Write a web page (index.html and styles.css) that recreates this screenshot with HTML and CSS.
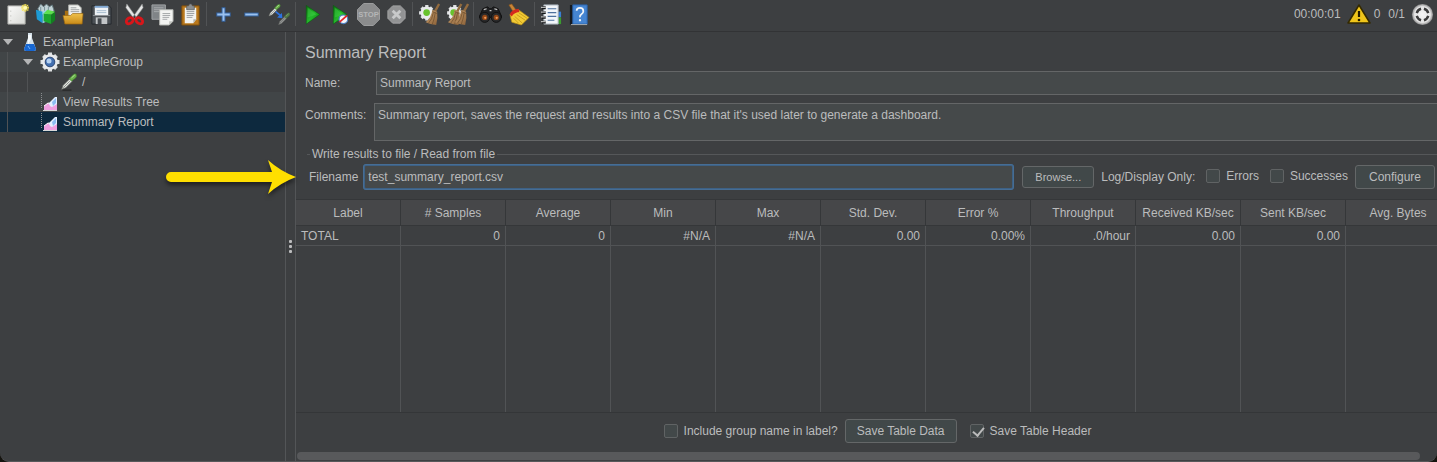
FILE: index.html
```html
<!DOCTYPE html>
<html lang="en">
<head>
<meta charset="utf-8">
<meta name="viewport" content="width=device-width, initial-scale=1">
<title>Summary Report</title>
<link rel="stylesheet" href="styles.css">
</head>
<body>
<svg class="defs" aria-hidden="true">
  <defs>
    <linearGradient id="green" x1="0" y1="0" x2="1" y2="1"><stop offset="0" stop-color="#0a6a0e"/><stop offset=".5" stop-color="#25b82c"/><stop offset="1" stop-color="#077a0c"/></linearGradient>
    <linearGradient id="gold" x1="0" y1="0" x2="0" y2="1"><stop offset="0" stop-color="#efc04c"/><stop offset="1" stop-color="#c98a18"/></linearGradient>
    <linearGradient id="paper" x1="0" y1="0" x2="1" y2="1"><stop offset="0" stop-color="#fbfbfa"/><stop offset="1" stop-color="#d9dad6"/></linearGradient>
    <linearGradient id="straw" x1="0" y1="0" x2="1" y2="1"><stop offset="0" stop-color="#c8a070"/><stop offset="1" stop-color="#8d6238"/></linearGradient>
    <radialGradient id="silver"><stop offset="0" stop-color="#f5f5f5"/><stop offset=".75" stop-color="#e4e4e4"/><stop offset="1" stop-color="#8c8c8c"/></radialGradient>
    <g id="gear">
      <g stroke="#dfe1e2" stroke-width="4"><path d="M12 2.500v19M2.500 12h19M5.500 5.500l13 13M18.500 5.500l-13 13"/></g>
      <circle cx="12" cy="12" r="7.800" fill="#e9eaec"/>
    </g>
    <g id="pipette">
      <path d="M3 21l2-5 8-8 3 3-8 8z" fill="#e4e6e2" stroke="#63665f" stroke-width=".8"/>
      <path d="M5 19l8-8" stroke="#8d928c" stroke-width="1.200"/>
      <path d="M12 8l5-5q3-2 4 0t-1 4l-5 4z" fill="#69b04b" stroke="#3f7d2b" stroke-width=".6"/>
      <path d="M15 7l4-3.500" stroke="#b4e39b" stroke-width="1.200"/>
    </g>
    <g id="play"><path d="M5.500 2.500L19.500 12 5.500 22z" fill="url(#green)" stroke="#0b5d10" stroke-width=".6"/><path d="M7 5v10l9-3z" fill="#3ed044" opacity=".5"/></g>
    <g id="chart">
      <path d="M.5 0v16" stroke="#8a8d8f" stroke-dasharray="1 1"/>
      <path d="M3 17v-4l4-3 4 1 5-4v10z" fill="#ee9fe0"/>
      <path d="M3 13l4-3 4 1" stroke="#fff" fill="none"/>
      <path d="M8 10l6-6h2v7l-5 3q-3-1-3-4z" fill="#e4efff"/>
      <path d="M11 9l4-4v5l-3 3z" fill="#8bbdf3"/>
      <path d="M2 17.500h14" stroke="#d8d8d8"/>
    </g>
    <g id="besom">
      <path d="M22 1l-5 9" stroke="#936b3e" stroke-width="2.500"/>
      <path d="M15 7l5 2q1 7-1 14l-6-1-5-2q6-5 7-13z" fill="url(#straw)"/>
      <path d="M16 10q-1 7-5 11M18 10q-1 7-3 12M15 9l5 2" stroke="#70502e" fill="none" stroke-width=".8"/>
    </g>
  </defs>
</svg>

<div class="window">
  <header class="toolbar">
    <button class="tool" aria-label="New"><svg viewBox="0 0 24 24"><path d="M2 3h18v19H2z" fill="url(#paper)" stroke="#a9aaa6"/><path d="M5 8v1M5 13v1M5 18v1" stroke="#b5b5b0"/><circle cx="20" cy="5" r="4" fill="#f7e65c" opacity=".5"/><path d="M20 1v8M16 5h8M17 2l6 6M23 2l-6 6" stroke="#f7e452"/><circle cx="20" cy="5" r="2" fill="#fffbb4"/></svg></button>
    <button class="tool" aria-label="Templates"><svg viewBox="0 0 24 24"><path d="M4 6l3-5 3 3 3-3 3 3 3-2 2 6-6 4H7z" fill="#c1d2d6" stroke="#62777c"/><path d="M7 4v5M11 4v4M15 4v4" stroke="#779198"/><path d="M2 7l7 2v12l-6-4z" fill="#1d9bd6"/><path d="M9 9l5-2v12l-5 2z" fill="#93d5ec"/><path d="M10 11l8 1v10l-8-3z" fill="#1ca62e"/><path d="M18 12l4-3v9l-4 4z" fill="#128020"/><path d="M10 11l4-4 8 2-4 3z" fill="#5de14e"/></svg></button>
    <button class="tool" aria-label="Open"><svg viewBox="0 0 24 24"><path d="M3 8h5l1 2h12v12H3z" fill="#a86f12"/><path d="M7 2h10l3 3v11H7z" fill="#f0f1ef" stroke="#b0b2ae"/><path d="M9 5h6M9 7h9M9 9h9" stroke="#9da1a3"/><path d="M1 13h8l2-2h11l-1 11H3z" fill="url(#gold)" stroke="#966511" stroke-width=".7"/></svg></button>
    <button class="tool" aria-label="Save"><svg viewBox="0 0 24 24"><path d="M2 3h18l2 2v17H2z" fill="#4b5055" stroke="#25292d"/><path d="M5 3h14v10H5z" fill="#eef2f6"/><path d="M5 3h14v2H5z" fill="#7fa6d0"/><path d="M7 8h10M7 10h10" stroke="#a5bacd"/><path d="M6 15h12v7H6z" fill="#c2c5c7"/><path d="M8 16h4v6H8z" fill="#44494e"/><path d="M3 13h18" stroke="#8c9196"/></svg></button>
    <span class="sep"></span>
    <button class="tool" aria-label="Cut"><svg viewBox="0 0 24 24"><path d="M4 1l10 14-2 2L3 5zM20 1L10 15l2 2 9-12z" fill="#e4e5e5" stroke="#8d8f90" stroke-width=".6"/><g fill="none" stroke="#d8161a" stroke-width="3"><ellipse cx="7" cy="18.500" rx="3.800" ry="2.800" transform="rotate(-35 7 18.500)"/><ellipse cx="17" cy="18.500" rx="3.800" ry="2.800" transform="rotate(35 17 18.500)"/></g></svg></button>
    <button class="tool" aria-label="Copy"><svg viewBox="0 0 24 24"><path d="M1 2h14v15H1z" fill="#808487" stroke="#a0a3a5"/><path d="M3 5h10M3 7h10M3 9h8" stroke="#a8abad"/><path d="M9 7h14v12l-4 4H9z" fill="#f3f4f2" stroke="#b0b2ae"/><path d="M12 11h8M12 13h8M12 15h7M12 17h5" stroke="#a3a6a8"/><path d="M19 23v-4h4z" fill="#c1c3bf"/></svg></button>
    <button class="tool" aria-label="Paste"><svg viewBox="0 0 24 24"><path d="M3 3h18v20H3z" fill="#b9781c" stroke="#7d4e0e"/><path d="M6 5h12v12l-3 4H6z" fill="#f3f3f0"/><path d="M8 9h8M8 11h8M8 13h7M8 15h6" stroke="#9a9d9f"/><path d="M15 21v-4h3z" fill="#b4b6b1"/><path d="M8 3h2l1-2h2l1 2h2v4H8z" fill="#8b8e90" stroke="#55585a" stroke-width=".7"/></svg></button>
    <span class="sep"></span>
    <button class="tool" aria-label="Expand"><svg viewBox="0 0 24 24"><path d="M12 4.500v15M4.500 12h15" stroke="#3465a4" stroke-width="4"/><path d="M12 5.500v13M5.500 12h13" stroke="#9bc1ee" stroke-width="2"/></svg></button>
    <button class="tool" aria-label="Collapse"><svg viewBox="0 0 24 24"><path d="M4.500 12h15" stroke="#3465a4" stroke-width="4"/><path d="M5.500 12h13" stroke="#9bc1ee" stroke-width="2"/></svg></button>
    <button class="tool" aria-label="Toggle"><svg viewBox="0 0 24 24"><use href="#pipette" transform="translate(-1 0) scale(.65)"/><use href="#pipette" transform="translate(9 9) scale(.65)" opacity=".55"/><path d="M8 9l5 4" stroke="#2d73e0" stroke-width="1.800"/><path d="M15 16l-5.500-1 5-4.500z" fill="#2d73e0"/></svg></button>
    <span class="sep"></span>
    <button class="tool" aria-label="Start"><svg viewBox="0 0 24 24"><use href="#play"/></svg></button>
    <button class="tool" aria-label="Start no pauses"><svg viewBox="0 0 24 24"><use href="#play" x="-1"/><circle cx="15" cy="17" r="4.500" fill="#f4f6fa" stroke="#5080c4" stroke-width="1.200"/><path d="M11 20l8-7" stroke="#e32424" stroke-width="1.800"/></svg></button>
    <button class="tool" aria-label="Stop"><svg viewBox="0 0 24 24"><path d="M7 .5h10l6.500 6.500v10L17 23.500H7L.5 17V7z" fill="#8b8c8d" stroke="#a0a1a2"/><text class="stop-text" x="12" y="15" text-anchor="middle">STOP</text></svg></button>
    <button class="tool" aria-label="Shutdown"><svg viewBox="0 0 24 24"><path d="M8 3h8l5 5v8l-5 5H8l-5-5V8z" fill="#929394" stroke="#a3a4a5"/><path d="M8 8l8 8M16 8l-8 8" stroke="#c8c9ca" stroke-width="3"/></svg></button>
    <span class="sep"></span>
    <button class="tool" aria-label="Clear"><svg viewBox="0 0 24 24"><use href="#gear" transform="translate(-1 0) scale(.85)"/><circle cx="9" cy="10" r="3.500" fill="#68c22d"/><use href="#besom"/></svg></button>
    <button class="tool" aria-label="Clear all"><svg viewBox="0 0 24 24"><use href="#gear" transform="translate(-1 0) scale(.85)"/><circle cx="8" cy="10" r="3.500" fill="#68c22d"/><use href="#besom" x="-6"/><use href="#besom" x="1"/></svg></button>
    <span class="sep"></span>
    <button class="tool" aria-label="Search"><svg viewBox="0 0 24 24"><path d="M4 6l5-2 2 2h2l2-2 5 2 4 9H0z" fill="#202123" stroke="#111"/><path d="M5 7l3-1M16 6l3 1M11 8h2" stroke="#c2c2c2" stroke-width="1.300"/><circle cx="6" cy="15" r="5.200" fill="#29292a" stroke="#111"/><circle cx="18" cy="15" r="5.200" fill="#29292a" stroke="#111"/><circle cx="6" cy="15" r="2.700" fill="#964816"/><circle cx="18" cy="15" r="2.700" fill="#964816"/><circle cx="6.500" cy="15.500" r="1.200" fill="#ef9a58"/><circle cx="18.500" cy="15.500" r="1.200" fill="#ef9a58"/></svg></button>
    <button class="tool" aria-label="Reset search"><svg viewBox="0 0 24 24"><path d="M2 2l3-1 5 7-3 2z" fill="#c88436" stroke="#8d5718" stroke-width=".6"/><path d="M12 7l11 8-8 8-10-3-2-8z" fill="#f2cb35" stroke="#b58a13" stroke-width=".7"/><path d="M10 12l9 6M8 14l8 7M7 16l5 5M12 10l9 6" stroke="#c99f1b"/><path d="M3 12q1-5 9-6l1 3q-6 1-8 5z" fill="#d52a1e"/></svg></button>
    <span class="sep"></span>
    <button class="tool" aria-label="Function helper"><svg viewBox="0 0 24 24"><path d="M18 9h4v6h-4z" fill="#3a7fd2"/><path d="M18 15h4v7h-4z" fill="#3b9c2f"/><path d="M4 2h15v20H4z" fill="#f2f6fa" stroke="#a3acb5"/><path d="M8 6h9M8 10h9M8 14h9M8 18h7" stroke="#4e719d" stroke-width="1.300"/><path d="M2 5h4M2 10h4M2 15h4M2 20h4" stroke="#16181a" stroke-width="3"/><path d="M1 4.500h5M1 9.500h5M1 14.500h5M1 19.500h5" stroke="#e0e0e0"/></svg></button>
    <button class="tool" aria-label="Help"><svg viewBox="0 0 24 24"><path d="M2 2h4v20l-4 1z" fill="#15191f"/><path d="M5 2h15v20H5z" fill="#4585d3" stroke="#2c62a8"/><path d="M3 22.500h17" stroke="#a9aeb3"/><path d="M9 8q0-3 3.500-3T16 8.500q0 2-2 3.200T12.500 15" fill="none" stroke="#f2f6fb" stroke-width="1.800"/><circle cx="12.500" cy="18" r="1.200" fill="#f2f6fb"/></svg></button>
    <div class="status">
      <span>00:00:01</span>
      <svg class="warn" viewBox="0 0 24 24"><path d="M12 3L23 21H1z" fill="#efc51a" stroke="#332900" stroke-width="1.500" stroke-linejoin="round"/><path d="M12 9v6" stroke="#221b00" stroke-width="2.200"/><circle cx="12" cy="18" r="1.300" fill="#221b00"/></svg>
      <span class="errors">0</span>
      <span>0/1</span>
      <svg class="led" viewBox="0 0 24 24"><circle cx="12" cy="12" r="11" fill="url(#silver)"/><g fill="none" stroke="#3b3b3b" stroke-width="2.500"><path d="M6 10.500Q7 7 10.500 6M13.500 6Q17 7 18 10.500M18 13.500Q17 17 13.500 18M10.500 18Q7 17 6 13.500"/></g></svg>
    </div>
  </header>

  <div class="body">
    <nav class="tree" aria-label="Test plan">
      <ul>
        <li class="row"><button class="toggle" aria-label="Collapse ExamplePlan"></button><svg class="node" viewBox="0 0 18 20"><path d="M7 1h4v5l4 11q0 2-2 2H5q-2 0-2-2L7 6z" fill="#d5e1ea"/><path d="M7 3h3v4l-3 6z" fill="#f7fafc"/><path d="M5 12h8l2 5q0 2-2 2H5q-2 0-2-2z" fill="#1767d2"/><path d="M7 14l2 3" stroke="#73b4ff"/></svg><span>ExamplePlan</span></li>
        <li class="row level-1"><button class="toggle" aria-label="Collapse ExampleGroup"></button><svg class="node" viewBox="2 2 20 20"><use href="#gear"/><circle cx="12" cy="12" r="4.800" fill="#426fb0" stroke="#2f4874"/><circle cx="11" cy="11" r="2.500" fill="#b6d1f0"/></svg><span>ExampleGroup</span></li>
        <li class="row level-2"><svg class="node" viewBox="1 1 22 22"><path d="M4 22h11" stroke="#2c2d2e" stroke-width="2"/><use href="#pipette"/></svg><span>/</span></li>
        <li class="row level-1 leaf"><svg class="node" viewBox="0 0 18 18"><use href="#chart"/></svg><span>View Results Tree</span></li>
        <li class="row level-1 leaf selected"><svg class="node" viewBox="0 0 18 18"><use href="#chart"/></svg><span>Summary Report</span></li>
      </ul>
    </nav>
    <div class="splitter"><i></i><i></i><i></i></div>

    <main class="panel">
      <div class="content">
        <h1>Summary Report</h1>
        <div class="field name"><label for="name">Name:</label><input id="name" type="text" value="Summary Report"></div>
        <div class="field comments"><label for="comments">Comments:</label><textarea id="comments">Summary report, saves the request and results into a CSV file that it's used later to generate a dashboard.</textarea></div>
        <fieldset>
          <legend>Write results to file / Read from file</legend>
          <div class="file">
            <label for="filename">Filename</label>
            <input id="filename" type="text" value="test_summary_report.csv">
            <button class="btn small">Browse...</button>
            <span class="only">Log/Display Only:</span>
            <label class="check"><input type="checkbox">Errors</label>
            <label class="check"><input type="checkbox">Successes</label>
            <button class="btn configure">Configure</button>
          </div>
        </fieldset>
        <table>
          <thead><tr><th>Label</th><th># Samples</th><th>Average</th><th>Min</th><th>Max</th><th>Std. Dev.</th><th>Error %</th><th>Throughput</th><th>Received KB/sec</th><th>Sent KB/sec</th><th>Avg. Bytes</th></tr></thead>
          <tbody>
            <tr><td>TOTAL</td><td>0</td><td>0</td><td>#N/A</td><td>#N/A</td><td>0.00</td><td>0.00%</td><td>.0/hour</td><td>0.00</td><td>0.00</td><td></td></tr>
            <tr class="rest"><td></td><td></td><td></td><td></td><td></td><td></td><td></td><td></td><td></td><td></td><td></td></tr>
          </tbody>
        </table>
        <footer>
          <label class="check"><input type="checkbox">Include group name in label?</label>
          <button class="btn">Save Table Data</button>
          <label class="check header-check"><input type="checkbox" checked>Save Table Header</label>
        </footer>
      </div>
      <div class="scrollbar"><div class="thumb"></div></div>
    </main>
  </div>
  <svg class="arrow" viewBox="0 0 136 44"><path d="M9 12H110L106 0Q118 11 134 17Q118 23 106 34L110 22H9a5 5 0 0 1 0-10z" fill="#ffdf00"/></svg>
</div>
</body>
</html>
```
FILE: styles.css
```css
* { box-sizing: border-box; }

body {
  margin: 0;
  height: 100vh;
  background: #15140f;
  color: #bbbcbd;
  font: 12px/20px "Liberation Sans", Arial, sans-serif;
  overflow: hidden;
}

button, input, textarea { font: inherit; color: inherit; }
.defs { position: absolute; width: 0; height: 0; }

.window {
  position: relative;
  display: flex;
  flex-direction: column;
  height: 100%;
  background: #3d3f41;
  border-bottom: 1px solid #57585a;
  border-radius: 0 0 9px 9px;
  overflow: hidden;
}

/* Toolbar */
.toolbar {
  display: flex;
  flex: none;
  align-items: center;
  height: 32px;
  padding: 0 3px 3px;
  border-bottom: 1px solid #323335;
}
.tool {
  display: flex;
  justify-content: center;
  align-items: center;
  width: 28px;
  height: 28px;
  padding: 0;
  border: 0;
  background: none;
}
.tool svg { width: 23px; height: 23px; }
.stop-text { font: bold 8px "Liberation Sans", sans-serif; fill: #b5b6b7; }
.sep { width: 1px; height: 24px; margin: 0 2px; background: #515355; }
.status { display: flex; align-items: center; margin-left: auto; }
.warn { width: 24px; height: 24px; margin: 0 3px 0 6px; }
.errors { margin-right: 8px; }
.led { width: 23px; height: 23px; margin-left: 6px; }

.body { display: flex; flex: 1; min-height: 0; }

/* Tree */
.tree { width: 285px; flex: none; }
.tree ul { list-style: none; margin: 0; padding: 0; }
.row {
  display: flex;
  align-items: center;
  height: 20px;
  line-height: 22px;
}
.row:nth-child(even) { background-color: #414547; }
.row .node { width: 18px; height: 20px; margin: 0 4px 0 5px; }
.toggle {
  width: 0;
  height: 0;
  margin-left: 3px;
  padding: 0;
  border: 5px solid transparent;
  border-top: 6px solid #b4b5b6;
  border-bottom: 0;
  background: none;
}
.row > .toggle + .node { margin-left: 8px; }
.level-1, .level-2 {
  background-image: linear-gradient(#505254, #505254);
  background-size: 1px 100%;
  background-position: 7px 0;
  background-repeat: no-repeat;
}
.level-1 .toggle { margin-left: 23px; }
.row.level-1 .toggle + .node { width: 20px; margin: 0 3px 0 7px; }
.level-2 {
  padding-left: 55px;
  background-image: linear-gradient(#505254, #505254), linear-gradient(#505254, #505254);
  background-position: 7px 0, 27px 0;
}
.leaf { padding-left: 36px; }
.row.selected { background-color: #0d293e; }

.splitter {
  display: flex;
  flex: none;
  flex-direction: column;
  align-items: center;
  justify-content: center;
  gap: 2px;
  width: 11px;
  border-left: 1px solid #535557;
  border-right: 1px solid #535557;
}
.splitter i { width: 3px; height: 3px; border-radius: 1px; background: #bcbdbe; }

/* Report */
.panel { display: flex; flex: 1; flex-direction: column; min-width: 0; overflow: hidden; }
.content { display: flex; flex: 1; flex-direction: column; width: calc(100% + 14px); min-height: 0; }
h1 { margin: 11px 0 8px 9px; font-size: 16px; line-height: 20px; font-weight: 400; }
.field { display: flex; align-items: center; padding-left: 9px; }
.field label { width: 71px; }
.field input, .field textarea {
  flex: 1;
  margin: 0;
  padding: 0 3px;
  border: 1px solid #646667;
  border-radius: 0;
  background: #45494a;
  outline: 0;
}
.field input { height: 24px; }
.comments { margin-top: 8px; }
.comments label { width: 69px; margin-bottom: 14px; }
.field textarea { height: 38px; padding-top: 1px; resize: none; overflow: hidden; }

fieldset {
  min-width: 0;
  margin: 3px 0 0 11px;
  padding: 0 16px 0 2px;
  border: 0 solid #555759;
  border-top-width: 1px;
}
legend { margin-left: 1px; padding: 0 2px; line-height: 20px; }
.file { display: flex; align-items: center; height: 35px; padding-bottom: 9px; }
#filename {
  flex: 1;
  min-width: 0;
  height: 26px;
  margin: 0 8px 0 5px;
  padding: 0 3px;
  border: 2px solid #3d6185;
  outline: 1px solid #466d94;
  outline-offset: -1px;
  border-radius: 3px;
  background: #45494a;
}
.btn {
  height: 24px;
  padding: 0 13px;
  border: 1px solid #646768;
  border-radius: 3px;
  background: #414849;
  line-height: 20px;
  white-space: nowrap;
}
.btn.small { height: 22px; padding: 0 12px; font-size: 11px; line-height: 18px; }
.only { margin: 0 11px 0 7px; white-space: nowrap; }
.check { display: flex; align-items: center; white-space: nowrap; }
.check + .check { margin-left: 11px; }
.check input {
  appearance: none;
  width: 14px;
  height: 14px;
  margin: 0 6px 0 0;
  border: 1px solid #606364;
  border-radius: 2px;
  background: #424849;
}
.check input:checked::after {
  content: "";
  display: block;
  width: 5px;
  height: 9px;
  margin: 0 0 0 4px;
  border: solid #bbb;
  border-width: 0 2px 2px 0;
  transform: rotate(40deg);
}
.file .check { margin-bottom: 2px; }
.configure { margin-left: 7px; }

table { flex: 1; display: flex; flex-direction: column; min-height: 0; border-bottom: 1px solid #343638; }
thead, tbody { display: flex; flex-direction: column; }
tbody { flex: 1; }
tr { display: grid; grid-template-columns: repeat(11, minmax(0, 1fr)); }
th, td { padding: 0 5px; border-right: 1px solid #515355; white-space: nowrap; }
th {
  height: 27px;
  padding: 0;
  border-top: 1px solid #353739;
  border-bottom: 1px solid #353739;
  border-right-color: #353739;
  background: #464749;
  font-weight: 400;
  line-height: 27px;
}
td { height: 20px; border-bottom: 1px solid #515355; line-height: 20px; text-align: right; }
td:first-child { text-align: left; }
.rest { flex: 1; }
.rest td { height: auto; border-bottom: 0; }

footer { display: flex; flex: none; align-items: center; justify-content: center; height: 38px; padding: 0 0 2px 8px; }
footer .btn { margin: 0 13px 0 7px; padding: 0 11px; }

.scrollbar { flex: none; height: 10px; padding: 1px 17px 1px 1px; }
.thumb { height: 8px; border-radius: 4px; background: #58595b; }

/* Callout over the tree and splitter */
.arrow {
  position: absolute;
  left: 162px;
  top: 160px;
  width: 136px;
  height: 44px;
  filter: drop-shadow(0 3px 2px rgba(0, 0, 0, .5));
}
```
